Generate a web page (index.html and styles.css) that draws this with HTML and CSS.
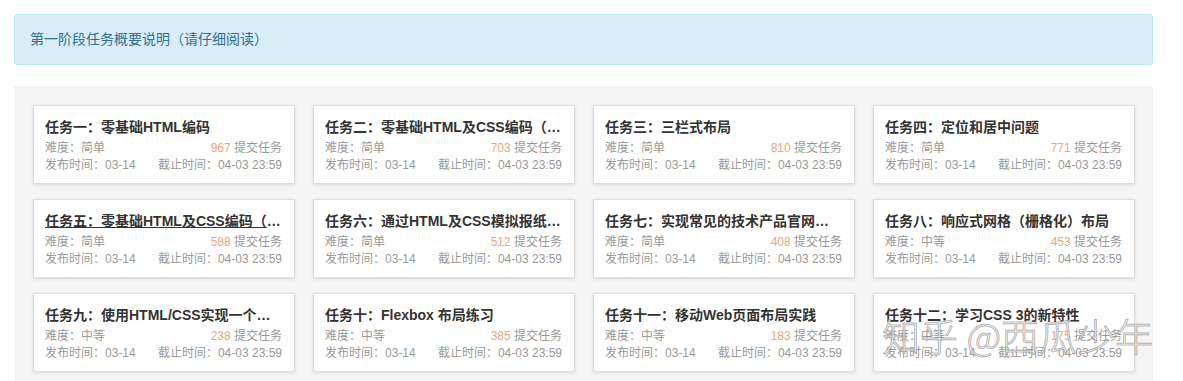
FILE: index.html
```html
<!DOCTYPE html>
<html lang="zh-CN">
<head>
    <meta charset="UTF-8">
    <title>任务列表</title>
    <link rel="stylesheet" href="styles.css">
</head>
<body>
    <div class="alert">第一阶段任务概要说明（请仔细阅读）</div>
    <div class="panel">
        <ul class="task-list">
            <li class="task">
                <h3 class="task-title">任务一：零基础HTML编码</h3>
                <div class="task-row"><span>难度：简单</span><span><em>967</em> 提交任务</span></div>
                <div class="task-row"><span>发布时间：03-14</span><span>截止时间：04-03 23:59</span></div>
            </li>
            <li class="task">
                <h3 class="task-title">任务二：零基础HTML及CSS编码（一）</h3>
                <div class="task-row"><span>难度：简单</span><span><em>703</em> 提交任务</span></div>
                <div class="task-row"><span>发布时间：03-14</span><span>截止时间：04-03 23:59</span></div>
            </li>
            <li class="task">
                <h3 class="task-title">任务三：三栏式布局</h3>
                <div class="task-row"><span>难度：简单</span><span><em>810</em> 提交任务</span></div>
                <div class="task-row"><span>发布时间：03-14</span><span>截止时间：04-03 23:59</span></div>
            </li>
            <li class="task">
                <h3 class="task-title">任务四：定位和居中问题</h3>
                <div class="task-row"><span>难度：简单</span><span><em>771</em> 提交任务</span></div>
                <div class="task-row"><span>发布时间：03-14</span><span>截止时间：04-03 23:59</span></div>
            </li>
            <li class="task">
                <h3 class="task-title hover">任务五：零基础HTML及CSS编码（二）</h3>
                <div class="task-row"><span>难度：简单</span><span><em>588</em> 提交任务</span></div>
                <div class="task-row"><span>发布时间：03-14</span><span>截止时间：04-03 23:59</span></div>
            </li>
            <li class="task">
                <h3 class="task-title">任务六：通过HTML及CSS模拟报纸排版</h3>
                <div class="task-row"><span>难度：简单</span><span><em>512</em> 提交任务</span></div>
                <div class="task-row"><span>发布时间：03-14</span><span>截止时间：04-03 23:59</span></div>
            </li>
            <li class="task">
                <h3 class="task-title">任务七：实现常见的技术产品官网的页面架构及样式布局</h3>
                <div class="task-row"><span>难度：简单</span><span><em>408</em> 提交任务</span></div>
                <div class="task-row"><span>发布时间：03-14</span><span>截止时间：04-03 23:59</span></div>
            </li>
            <li class="task">
                <h3 class="task-title">任务八：响应式网格（栅格化）布局</h3>
                <div class="task-row"><span>难度：中等</span><span><em>453</em> 提交任务</span></div>
                <div class="task-row"><span>发布时间：03-14</span><span>截止时间：04-03 23:59</span></div>
            </li>
            <li class="task">
                <h3 class="task-title">任务九：使用HTML/CSS实现一个复杂页面</h3>
                <div class="task-row"><span>难度：中等</span><span><em>238</em> 提交任务</span></div>
                <div class="task-row"><span>发布时间：03-14</span><span>截止时间：04-03 23:59</span></div>
            </li>
            <li class="task">
                <h3 class="task-title">任务十：Flexbox 布局练习</h3>
                <div class="task-row"><span>难度：中等</span><span><em>385</em> 提交任务</span></div>
                <div class="task-row"><span>发布时间：03-14</span><span>截止时间：04-03 23:59</span></div>
            </li>
            <li class="task">
                <h3 class="task-title">任务十一：移动Web页面布局实践</h3>
                <div class="task-row"><span>难度：中等</span><span><em>183</em> 提交任务</span></div>
                <div class="task-row"><span>发布时间：03-14</span><span>截止时间：04-03 23:59</span></div>
            </li>
            <li class="task">
                <h3 class="task-title">任务十二：学习CSS 3的新特性</h3>
                <div class="task-row"><span>难度：中等</span><span><em>175</em> 提交任务</span></div>
                <div class="task-row"><span>发布时间：03-14</span><span>截止时间：04-03 23:59</span></div>
            </li>
        </ul>
    </div>
    <div class="watermark">知乎 @西瓜少年</div>
</body>
</html>
```

FILE: styles.css
```css
body,div,ul,li,h3{
    padding: 0;
    margin: 0;
}
ul{
    list-style-type: none;
}
body{
    position: relative;
    padding: 14px 30px 0 14px;
    background-color: #fff;
    font-family: 'Liberation Sans', 'Noto Sans CJK SC', sans-serif;
    color: #333;
    overflow: hidden;
}
.alert{
    height: 49px;
    line-height: 49px;
    padding-left: 15px;
    border: 1px solid #bce8f1;
    border-radius: 3px;
    background-color: #d9edf7;
    font-size: 14px;
    color: #31708f;
}
.panel{
    margin-top: 21px;
    padding: 19px 18px 20px 19px;
    background-color: #f5f5f5;
}
.task-list{
    display: grid;
    grid-template-columns: repeat(4, 1fr);
    column-gap: 18px;
    row-gap: 15px;
}
.task{
    min-width: 0;
    height: 79px;
    box-sizing: border-box;
    padding: 11px 12px 9px 11px;
    border: 1px solid #ddd;
    background-color: #fff;
    box-shadow: 0 1px 3px rgba(0,0,0,.12);
}
.task-title{
    height: 20px;
    line-height: 20px;
    margin-bottom: 3px;
    font-size: 14px;
    font-weight: bold;
    color: #333;
    white-space: nowrap;
    overflow: hidden;
    text-overflow: ellipsis;
}
.task-title.hover{
    text-decoration: underline;
}
.task-row{
    display: flex;
    justify-content: space-between;
    height: 17px;
    line-height: 17px;
    font-size: 12px;
    color: #999;
    white-space: nowrap;
}
.task-row em{
    font-style: normal;
    color: #eba97c;
}
.watermark{
    position: absolute;
    right: 30px;
    bottom: 38px;
    line-height: 1;
    font-family: 'Noto Sans CJK SC', sans-serif;
    font-size: 38px;
    font-weight: 300;
    color: rgba(255,255,255,.8);
    -webkit-text-stroke: 1px rgba(130,130,130,.6);
    pointer-events: none;
}
```
